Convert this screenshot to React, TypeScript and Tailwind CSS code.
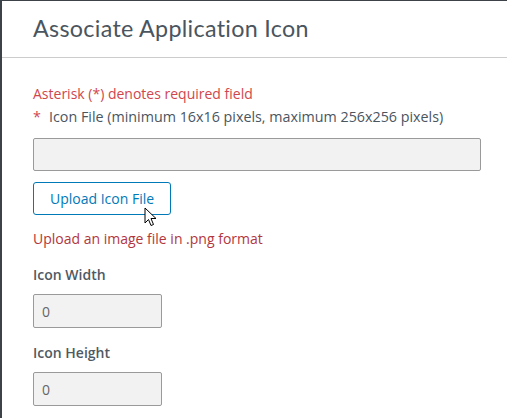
export default function App() {
    return (
        <div className="w-[507px] h-[418px] overflow-hidden bg-white border-l-2 border-t border-[#3c4248] font-['Open_Sans',sans-serif]">
            <div className="h-[57px] border-b border-[#cccccc] pl-[31px] pt-[12px]">
                <h2 className="text-[23.3px] leading-[30px] text-[#4a5560] font-['Lato',sans-serif] tracking-[0.3px]">
                    Associate Application Icon
                </h2>
            </div>

            <div className="pl-[31px] pr-[24px] pt-[26px]">
                <p className="text-[14px] leading-[19px] text-[#d0464d]">Asterisk (*) denotes required field</p>
                <div className="mt-[4px] flex items-center text-[14.3px] leading-[19px] text-[#4a5560]">
                    <span className="text-[#d0464d] w-[16px]">*</span>
                    <span>Icon File (minimum 16x16 pixels, maximum 256x256 pixels)</span>
                </div>
                <input
                    readOnly
                    className="mt-[12px] block w-[448px] h-[33px] bg-[#f2f2f2] border border-[#9a9a9a] rounded-[2px]"
                />
                <div className="relative mt-[11px] w-[138px]">
                    <button className="w-[138px] h-[33px] border border-[#0079b8] rounded-[3px] text-[14px] text-[#0079b8] bg-white">
                        Upload Icon File
                    </button>
                    <svg className="absolute left-[111px] top-[25px]" width="14" height="21" viewBox="0 0 14 21">
                        <path d="M1 1 L1 16 L4.5 12.5 L7 18.5 L9.5 17.5 L7 11.5 L12 11.5 Z" fill="#fff" stroke="#000" strokeWidth="1" strokeLinejoin="round" />
                    </svg>
                </div>
                <p className="mt-[14px] text-[14px] leading-[19px] text-[#b2363e]">Upload an image file in .png format</p>

                <label className="block mt-[17px] text-[14px] leading-[19px] font-semibold text-[#4f5963]">Icon Width</label>
                <div className="mt-[10px] w-[129px] h-[34px] bg-[#f2f2f2] border border-[#9a9a9a] rounded-[2px] pl-[8px] flex items-center text-[14px] text-[#666]">0</div>

                <label className="block mt-[15px] text-[14px] leading-[19px] font-semibold text-[#4f5963]">Icon Height</label>
                <div className="mt-[10px] w-[129px] h-[34px] bg-[#f2f2f2] border border-[#9a9a9a] rounded-[2px] pl-[8px] flex items-center text-[14px] text-[#666]">0</div>
            </div>
        </div>
    );
}
